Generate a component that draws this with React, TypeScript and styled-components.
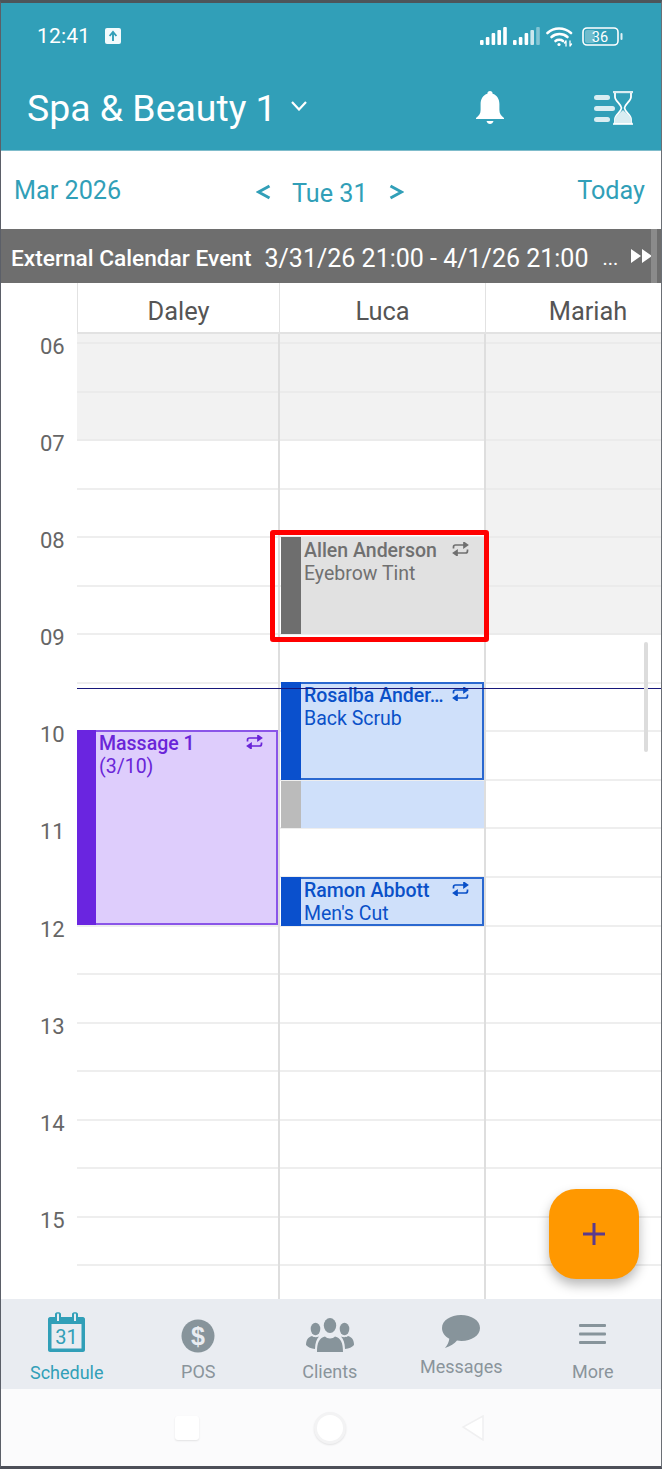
import React from 'react'
import styled, { createGlobalStyle } from 'styled-components'

const TEAL = '#319fb8'
const SLOT = 48.55

const GlobalStyle = createGlobalStyle`
  html, body {
    margin: 0;
    padding: 0;
    background: #fff;
  }
  * {
    box-sizing: border-box;
  }
`

const Phone = styled.div`
  width: 662px;
  height: 1469px;
  display: flex;
  flex-direction: column;
  overflow: hidden;
  border-top: 3px solid #4d555a;
  border-bottom: 3px solid #4d4f58;
  border-left: 1px solid #5b5f68;
  border-right: 1px solid #6b6f75;
  font-family: Roboto, 'Liberation Sans', sans-serif;
  position: relative;
`

const Header = styled.header`
  height: 148px;
  flex: none;
  background: ${TEAL};
  color: #fff;
  display: flex;
  flex-direction: column;
  border-bottom: 1px solid #7fbccb;
`

const StatusBar = styled.div`
  height: 62px;
  display: flex;
  align-items: center;
  justify-content: space-between;
  padding: 4px 38px 0 36px;
`

const StatusGroup = styled.div<{ $gap: number }>`
  display: flex;
  align-items: center;
  gap: ${(p) => p.$gap}px;
`

const WifiSlot = styled.div`
  display: flex;
  margin-right: 3px;
`

const Clock = styled.span`
  font-size: 21px;
  letter-spacing: 0.2px;
`

const TitleRow = styled.div`
  flex: 1;
  display: flex;
  align-items: center;
  padding: 0 28px 0 26px;
`

const Title = styled.h1`
  margin: 0;
  font-size: 37.4px;
  font-weight: 400;
  line-height: 44px;
`

const Chevron = styled.svg`
  margin-left: 14px;
  margin-top: -3px;
`

const TitleActions = styled.div`
  margin-left: auto;
  display: flex;
  align-items: center;
  gap: 90px;
`

const DateBar = styled.div`
  height: 78px;
  flex: none;
  display: grid;
  grid-template-columns: 242px auto 1fr;
  align-items: center;
  padding: 0 16px 0 13px;
  color: ${TEAL};
  background: #fff;
  font-size: 25.2px;
`

const DayPicker = styled.div`
  display: flex;
  align-items: center;
  gap: 21px;
  padding-top: 6px;
`

const Arrow = styled.svg`
  margin-top: -2px;
`

const TodayLabel = styled.span`
  justify-self: end;
`

const Banner = styled.div`
  height: 54px;
  flex: none;
  background: #6e6e6e;
  color: #fff;
  display: flex;
  align-items: center;
  padding: 4px 0 0 10px;
  position: relative;
  white-space: nowrap;
`

const BannerTitle = styled.span`
  font-size: 22.7px;
  font-weight: 500;
`

const BannerTime = styled.span`
  font-size: 25px;
  margin-left: 13px;
`

const BannerDots = styled.span`
  font-size: 20px;
  margin-left: 14px;
`

const BannerNext = styled.svg`
  margin-left: 13px;
  margin-top: -4px;
`

const BannerScroll = styled.div`
  position: absolute;
  right: 4px;
  top: 0;
  bottom: 0;
  width: 6px;
  background: #8b8b8b;
`

const StaffRow = styled.div`
  height: 51px;
  flex: none;
  display: grid;
  grid-template-columns: 76px 202px 206px 205px;
`

const StaffName = styled.div`
  display: flex;
  align-items: center;
  justify-content: center;
  font-size: 25.4px;
  color: #555;
  padding-top: 7px;
  border-left: 1px solid #e2e2e2;
  border-bottom: 2px solid #e2e2e2;
`

const Board = styled.div`
  flex: 1;
  min-height: 0;
  overflow: hidden;
  position: relative;
  display: grid;
  grid-template-columns: 76px 203px 206px 1fr;
`

const HourColumn = styled.div`
  display: flex;
  flex-direction: column;
  padding-top: 10px;
`

const HourCell = styled.div`
  height: ${SLOT * 2}px;
  flex: none;
  font-size: 22px;
  line-height: 22px;
  color: #666;
  padding-left: 39px;
  transform: translateY(-8px);
`

const StaffColumn = styled.div<{ $divider?: boolean }>`
  display: flex;
  flex-direction: column;
  position: relative;
  border-right: ${(p) => (p.$divider ? '2px solid #dedede' : 'none')};
`

const Slot = styled.div<{ $closed?: boolean; $height: number }>`
  height: ${(p) => p.$height}px;
  flex: none;
  background: ${(p) => (p.$closed ? '#f2f2f2' : '#fff')};
  border-bottom: 2px solid ${(p) => (p.$closed ? '#ebebeb' : '#eeeeee')};
`

const Appointment = styled.div<{
  $top: number
  $height: number
  $bg: string
  $line: string
  $text: string
  $left: number
  $width: number
  $barWidth: number
}>`
  position: absolute;
  z-index: 2;
  top: ${(p) => p.$top}px;
  left: ${(p) => p.$left}px;
  width: ${(p) => p.$width}px;
  height: ${(p) => p.$height}px;
  background: ${(p) => p.$bg};
  border: 2px solid ${(p) => p.$line};
  border-left: none;
  color: ${(p) => p.$text};
  padding: 0 0 0 ${(p) => p.$barWidth + 3}px;
  font-size: 19.5px;
  line-height: 23px;
`

const SideBar = styled.div<{ $color: string; $width: number }>`
  position: absolute;
  left: 0;
  top: -2px;
  bottom: -2px;
  width: ${(p) => p.$width}px;
  background: ${(p) => p.$color};
`

const BufferBlock = styled.div`
  position: absolute;
  z-index: 2;
  left: 1px;
  width: 203px;
  top: 447px;
  height: 47px;
  background: #cfe0fa;
`

const BufferBar = styled.div`
  width: 20px;
  height: 100%;
  background: #bbb;
`

const ClientName = styled.div`
  font-weight: 500;
  white-space: nowrap;
`

const ServiceName = styled.div`
  white-space: nowrap;
`

const RepeatMark = styled.svg`
  position: absolute;
  top: 3px;
  right: 13px;
`

const Selection = styled.div`
  position: absolute;
  z-index: 3;
  left: -10px;
  top: 196px;
  width: 219px;
  height: 112px;
  border: 5px solid #ff0000;
  border-radius: 3px;
  pointer-events: none;
`

const NowLine = styled.div`
  position: absolute;
  z-index: 4;
  left: 76px;
  right: 0;
  top: 354px;
  height: 1px;
  background: #17177a;
`

const ScrollThumb = styled.div`
  position: absolute;
  z-index: 4;
  right: 13px;
  top: 308px;
  width: 4px;
  height: 110px;
  border-radius: 2px;
  background: #dcdcdc;
`

const Fab = styled.button`
  position: absolute;
  z-index: 5;
  left: 548px;
  top: 1186px;
  width: 90px;
  height: 90px;
  border: none;
  border-radius: 27px;
  background: #ff9800;
  box-shadow: 0 6px 12px rgba(0, 0, 0, 0.28);
  display: flex;
  align-items: center;
  justify-content: center;
  padding: 0;
`

const TabBar = styled.nav`
  height: 90px;
  flex: none;
  background: #e9ecf1;
  display: grid;
  grid-template-columns: repeat(5, 131.5px);
`

const Tab = styled.div<{ $active?: boolean; $top: number }>`
  display: flex;
  flex-direction: column;
  align-items: center;
  justify-content: flex-start;
  padding-top: ${(p) => p.$top}px;
  color: ${(p) => (p.$active ? TEAL : '#8a949b')};
  font-size: 18px;
  line-height: 22px;
`

const TabLabel = styled.span<{ $gap: number }>`
  margin-top: ${(p) => p.$gap}px;
`

const SystemNav = styled.div`
  height: 77px;
  flex: none;
  background: #fbfbfc;
  display: flex;
  align-items: center;
  justify-content: center;
  padding-right: 2px;
`

const NavSlot = styled.div`
  width: 143px;
  display: flex;
  justify-content: center;
`

const NavSquare = styled.div`
  width: 24px;
  height: 24px;
  border-radius: 3px;
  background: #fff;
  box-shadow: 0 1px 2px rgba(0, 0, 0, 0.1);
`

const NavCircle = styled.div`
  width: 32px;
  height: 32px;
  border-radius: 50%;
  background: #fff;
  border: 3px solid #f3f3f4;
  box-shadow: 0 1px 2px rgba(0, 0, 0, 0.1);
`

const SignalBars = ({ dim }: { dim?: boolean }) => (
  <svg width="27" height="18" viewBox="0 0 27 18">
    <rect x="0" y="13" width="3.6" height="5" rx="1" fill="#fff" />
    <rect x="5.8" y="10" width="3.6" height="8" rx="1" fill="#fff" />
    <rect x="11.6" y="6" width="3.6" height="12" rx="1" fill="#fff" />
    <rect x="17.4" y="3" width="3.6" height="15" rx="1" fill="#fff" opacity={dim ? 0.75 : 1} />
    <rect x="23.2" y="0" width="3.6" height="18" rx="1" fill="#fff" opacity={dim ? 0.4 : 1} />
  </svg>
)

const Wifi = () => (
  <svg width="27" height="21" viewBox="0 0 27 21" fill="none" stroke="#fff" strokeWidth="2.6" strokeLinecap="round">
    <path d="M1.5 7 C8 1 18 1 25 7" />
    <path d="M5.5 11 C10 7 17 7 21.5 11" />
    <path d="M9.5 15 C11.5 13.4 15 13.4 17 15" />
    <circle cx="13" cy="18.5" r="1.6" fill="#fff" stroke="none" />
    <path d="M20 20 V15 M20 15 L18.5 17 M24 15 V20 M24 20 L25.5 18" strokeWidth="1.3" />
  </svg>
)

const Battery = () => (
  <svg width="41" height="19" viewBox="0 0 41 19" fill="none">
    <rect x="1" y="1" width="35" height="17" rx="4" stroke="#fff" strokeWidth="1.6" />
    <rect x="3" y="3" width="10" height="13" rx="2" fill="#fff" opacity="0.3" />
    <rect x="38.5" y="6" width="2" height="7" rx="1" fill="#fff" opacity="0.85" />
    <text x="18" y="15" textAnchor="middle" fontFamily="Roboto, sans-serif" fontSize="14.5" fill="#fff">
      36
    </text>
  </svg>
)

const UploadBadge = () => (
  <svg width="16" height="16" viewBox="0 0 16 16">
    <rect width="16" height="16" rx="2" fill="#f2fafc" />
    <path d="M8 13 V5 M4.6 8 L8 4 L11.4 8" fill="none" stroke={TEAL} strokeWidth="1.9" />
  </svg>
)

const Bell = () => (
  <svg width="28" height="33" viewBox="0 0 28 33">
    <path
      fill="#fff"
      d="M14 0 C15.6 0 16.6 1.1 16.6 2.7 C21 4 23.4 8 23.4 13 V19 C23.4 22.5 25 24.5 28 27 V28 H0 V27 C3 24.5 4.6 22.5 4.6 19 V13 C4.6 8 7 4 11.4 2.7 C11.4 1.1 12.4 0 14 0 Z"
    />
    <path fill="#fff" d="M10.5 30 H17.5 C17 32 15.6 33 14 33 C12.4 33 11 32 10.5 30 Z" />
  </svg>
)

const WaitList = () => (
  <svg width="39" height="34" viewBox="0 0 39 34">
    <rect x="0" y="4" width="16" height="5" rx="2.5" fill="#d9edf2" />
    <rect x="0" y="15" width="21" height="5" rx="2.5" fill="#d9edf2" />
    <rect x="0" y="26" width="16" height="5" rx="2.5" fill="#d9edf2" />
    <path d="M19 1 H39" stroke="#d9edf2" strokeWidth="2.4" />
    <path d="M19 33 H39" stroke="#d9edf2" strokeWidth="2.4" />
    <path
      d="M21 2 V6 C21 10 27 13 27.5 17 C27 21 21 24 21 28 V32 H37 V28 C37 24 31 21 30.5 17 C31 13 37 10 37 6 V2"
      fill="none"
      stroke="#fff"
      strokeWidth="1.8"
    />
    <path d="M21 32 V28 C21 25 26 22 29 19 C32 22 37 25 37 28 V32 Z" fill="#d9edf2" />
  </svg>
)

const RepeatIcon = ({ color }: { color: string }) => (
  <RepeatMark width="17" height="14" viewBox="0 0 17 14" fill="none" stroke={color} strokeWidth="1.7">
    <path d="M1.5 6.5 V5 C1.5 3.8 2.3 3 3.5 3 H15" />
    <path d="M12 0.6 L15.4 3 L12 5.4 Z" fill={color} />
    <path d="M15.5 7.5 V9 C15.5 10.2 14.7 11 13.5 11 H2" />
    <path d="M5 8.6 L1.6 11 L5 13.4 Z" fill={color} />
  </RepeatMark>
)

const CalendarIcon = () => (
  <svg width="37" height="40" viewBox="0 0 37 40">
    <path
      fill={TEAL}
      d="M2 5 H7 V2 C7 -0.5 13 -0.5 13 2 V5 H24 V2 C24 -0.5 30 -0.5 30 2 V5 H35 C36 5 37 6 37 7 V38 C37 39 36 40 35 40 H2 C1 40 0 39 0 38 V7 C0 6 1 5 2 5 Z"
    />
    <path fill="#e9ecf1" d="M9 2.5 C9 1 11 1 11 2.5 V9 H9 Z M26 2.5 C26 1 28 1 28 2.5 V9 H26 Z" />
    <rect x="3.5" y="12" width="30" height="24.5" fill="#e9ecf1" />
    <text x="18.5" y="32" textAnchor="middle" fontFamily="Roboto, sans-serif" fontSize="20" fill={TEAL}>
      31
    </text>
  </svg>
)

const DollarIcon = () => (
  <svg width="34" height="34" viewBox="0 0 34 34">
    <circle cx="17" cy="17" r="16.5" fill="#87949b" />
    <text x="17" y="26" textAnchor="middle" fontFamily="'Liberation Sans', sans-serif" fontWeight="700" fontSize="25" fill="#e9ecf1">
      $
    </text>
  </svg>
)

const ClientsIcon = () => (
  <svg width="48" height="34" viewBox="0 0 48 34" fill="#87949b">
    <ellipse cx="24" cy="7.5" rx="6.2" ry="7.5" />
    <path d="M11 34 C11 25 13 20 19 18.5 C21 21 27 21 29 18.5 C35 20 37 25 37 34 C30 34.7 18 34.7 11 34 Z" />
    <ellipse cx="9.5" cy="11" rx="4.8" ry="6.2" />
    <path d="M0 27 C0 22 2 19 6 18 C7.5 19.5 11 19.5 13 18.5 C10.5 21 9.2 25 9 31 C5 30.6 2 29.5 0 27 Z" />
    <ellipse cx="38.5" cy="11" rx="4.8" ry="6.2" />
    <path d="M48 27 C48 22 46 19 42 18 C40.5 19.5 37 19.5 35 18.5 C37.5 21 38.8 25 39 31 C43 30.6 46 29.5 48 27 Z" />
  </svg>
)

const BubbleIcon = () => (
  <svg width="38" height="33" viewBox="0 0 38 33">
    <path
      fill="#87949b"
      d="M19 0 C29.5 0 38 5.5 38 13 C38 20.5 29.5 26 19.5 26 C18 26 16.5 25.9 15 25.6 C12.5 28.8 8.5 31.5 3 33 C5.5 30 7 27 7.3 23.8 C2.8 21.4 0 17.5 0 13 C0 5.5 8.5 0 19 0 Z"
    />
  </svg>
)

const MenuIcon = () => (
  <svg width="27" height="20" viewBox="0 0 27 20" fill="#87949b">
    <rect y="0" width="27" height="3" rx="1" />
    <rect y="8.5" width="27" height="3" rx="1" />
    <rect y="17" width="27" height="3" rx="1" />
  </svg>
)

type Accent = { bg: string; line: string; text: string; bar: string }

const BLUE: Accent = { bg: '#cfe0fa', line: '#2a68d0', text: '#0a50c8', bar: '#0a50cd' }
const GREY: Accent = { bg: '#e1e1e1', line: '#e1e1e1', text: '#707070', bar: '#6e6e6e' }
const PURPLE: Accent = { bg: '#decdfc', line: '#8a55e8', text: '#6a25d8', bar: '#6a25e0' }

const hours = ['06', '07', '08', '09', '10', '11', '12', '13', '14', '15']
const halfHours = Array.from({ length: 20 }, (_, i) => i)

const Column = ({ closedUntil, divider, children }: { closedUntil: number; divider?: boolean; children?: React.ReactNode }) => (
  <StaffColumn $divider={divider}>
    <Slot $height={10} $closed />
    {halfHours.map((i) => (
      <Slot key={i} $height={SLOT} $closed={i < closedUntil} />
    ))}
    {children}
  </StaffColumn>
)

const Event = ({
  accent,
  top,
  height,
  left = 1,
  width = 203,
  barWidth = 20,
  name,
  detail,
}: {
  accent: Accent
  top: number
  height: number
  left?: number
  width?: number
  barWidth?: number
  name: string
  detail: string
}) => (
  <Appointment
    $top={top}
    $height={height}
    $bg={accent.bg}
    $line={accent.line}
    $text={accent.text}
    $left={left}
    $width={width}
    $barWidth={barWidth}
  >
    <SideBar $color={accent.bar} $width={barWidth} />
    <ClientName>{name}</ClientName>
    <ServiceName>{detail}</ServiceName>
    <RepeatIcon color={accent.text} />
  </Appointment>
)

const App = () => {
  return (
    <>
      <GlobalStyle />
      <Phone>
        <Header>
          <StatusBar>
            <StatusGroup $gap={15}>
              <Clock>12:41</Clock>
              <UploadBadge />
            </StatusGroup>
            <StatusGroup $gap={6}>
              <SignalBars />
              <SignalBars dim />
              <WifiSlot>
                <Wifi />
              </WifiSlot>
              <Battery />
            </StatusGroup>
          </StatusBar>
          <TitleRow>
            <Title>Spa &amp; Beauty 1</Title>
            <Chevron width="16" height="10" viewBox="0 0 16 10" fill="none" stroke="#fff" strokeWidth="2.2">
              <path d="M1 1 L8 8.5 L15 1" />
            </Chevron>
            <TitleActions>
              <Bell />
              <WaitList />
            </TitleActions>
          </TitleRow>
        </Header>

        <DateBar>
          <span>Mar 2026</span>
          <DayPicker>
            <Arrow width="15" height="16" viewBox="0 0 15 16" fill="none" stroke={TEAL} strokeWidth="3">
              <path d="M13.5 2 L2.5 8 L13.5 14" />
            </Arrow>
            <span>Tue 31</span>
            <Arrow width="15" height="16" viewBox="0 0 15 16" fill="none" stroke={TEAL} strokeWidth="3">
              <path d="M1.5 2 L12.5 8 L1.5 14" />
            </Arrow>
          </DayPicker>
          <TodayLabel>Today</TodayLabel>
        </DateBar>

        <Banner>
          <BannerTitle>External Calendar Event</BannerTitle>
          <BannerTime>3/31/26 21:00 - 4/1/26 21:00</BannerTime>
          <BannerDots>...</BannerDots>
          <BannerNext width="21" height="14" viewBox="0 0 21 14" fill="#fff">
            <path d="M0 0 L10 7 L0 14 Z M11 0 L21 7 L11 14 Z" />
          </BannerNext>
          <BannerScroll />
        </Banner>

        <StaffRow>
          <div />
          <StaffName>Daley</StaffName>
          <StaffName>Luca</StaffName>
          <StaffName>Mariah</StaffName>
        </StaffRow>

        <Board>
          <HourColumn>
            {hours.map((h) => (
              <HourCell key={h}>{h}</HourCell>
            ))}
          </HourColumn>
          <Column closedUntil={2} divider>
            <Event accent={PURPLE} top={396} height={195} left={0} width={201} barWidth={19} name="Massage 1" detail="(3/10)" />
          </Column>
          <Column closedUntil={2} divider>
            <Event accent={GREY} top={203} height={97} name="Allen Anderson" detail="Eyebrow Tint" />
            <Selection />
            <Event accent={BLUE} top={348} height={98} name="Rosalba Ander…" detail="Back Scrub" />
            <BufferBlock>
              <BufferBar />
            </BufferBlock>
            <Event accent={BLUE} top={543} height={49} name="Ramon Abbott" detail="Men's Cut" />
          </Column>
          <Column closedUntil={6} />
          <NowLine />
          <ScrollThumb />
        </Board>

        <TabBar>
          <Tab $active $top={13}>
            <CalendarIcon />
            <TabLabel $gap={10}>Schedule</TabLabel>
          </Tab>
          <Tab $top={20}>
            <DollarIcon />
            <TabLabel $gap={8}>POS</TabLabel>
          </Tab>
          <Tab $top={19}>
            <ClientsIcon />
            <TabLabel $gap={9}>Clients</TabLabel>
          </Tab>
          <Tab $top={16}>
            <BubbleIcon />
            <TabLabel $gap={8}>Messages</TabLabel>
          </Tab>
          <Tab $top={25}>
            <MenuIcon />
            <TabLabel $gap={17}>More</TabLabel>
          </Tab>
        </TabBar>

        <SystemNav>
          <NavSlot>
            <NavSquare />
          </NavSlot>
          <NavSlot>
            <NavCircle />
          </NavSlot>
          <NavSlot>
            <svg width="24" height="26" viewBox="0 0 24 26">
              <path d="M22 1 V25 L2 12 Z" fill="#fff" stroke="#f0f0f1" strokeWidth="1.5" />
            </svg>
          </NavSlot>
        </SystemNav>

        <Fab aria-label="Add">
          <svg width="24" height="24" viewBox="0 0 24 24" stroke="#5b3b8c" strokeWidth="3">
            <path d="M12 1 V23 M1 12 H23" />
          </svg>
        </Fab>
      </Phone>
    </>
  )
}

export default App
